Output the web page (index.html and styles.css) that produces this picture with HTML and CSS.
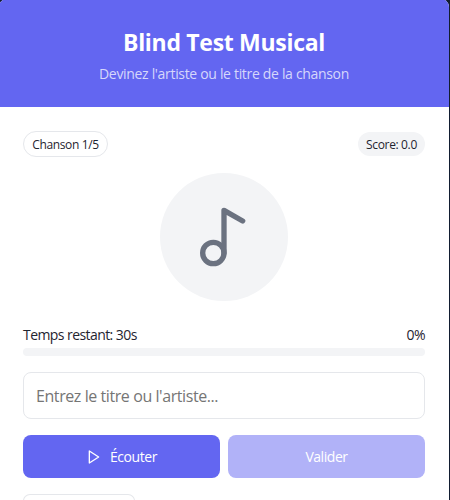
FILE: index.html
```html
<!DOCTYPE html>
<html lang="fr">
<head>
<meta charset="utf-8">
<title>Blind Test Musical</title>
<link rel="stylesheet" href="styles.css">
</head>
<body>
<main class="card">
  <header class="header">
    <h1 class="title">Blind Test Musical</h1>
    <p class="subtitle">Devinez l'artiste ou le titre de la chanson</p>
  </header>
  <div class="content">
    <div class="row">
      <span class="badge outline">Chanson 1/5</span>
      <span class="badge filled">Score: 0.0</span>
    </div>
    <div class="disc">
      <svg width="64" height="64" viewBox="0 0 24 24" fill="none" stroke="currentColor" stroke-width="2" stroke-linecap="round" stroke-linejoin="round"><circle cx="8" cy="18" r="4"/><path d="M12 18V2l7 4"/></svg>
    </div>
    <div class="row status"><span class="time">Temps restant: 30s</span><span class="percent">0%</span></div>
    <div class="progress"></div>
    <input class="answer" type="text" placeholder="Entrez le titre ou l'artiste...">
    <div class="actions">
      <button class="button"><svg width="16" height="16" viewBox="0 0 24 24" fill="none" stroke="currentColor" stroke-width="2" stroke-linecap="round" stroke-linejoin="round"><polygon points="5 3 19 12 5 21 5 3"/></svg><span class="listen">Écouter</span></button>
      <button class="button" disabled><span class="validate">Valider</span></button>
    </div>
    <div class="next"></div>
  </div>
</main>
</body>
</html>
```
FILE: styles.css
```css
* { box-sizing: border-box; }
body {
  margin: 0;
  height: 500px;
  overflow: hidden;
  background: #111c30;
  color: #1f2430;
  font-family: "Segoe UI", "Open Sans", "Noto Sans", sans-serif;
}
.card {
  width: 450px;
  height: 501px;
  margin: -1px 0 0 -1px;
  border-radius: 8px 8px 0 0;
  overflow: hidden;
  background: #fff;
}
.header {
  height: 108px;
  padding: 27px 24px 0;
  background: #6366f1;
  color: #fff;
  text-align: center;
  white-space: nowrap;
}
.title {
  margin: 0;
  font-size: 23px;
  font-weight: 700;
  line-height: 32px;
  letter-spacing: -0.3px;
}
.subtitle {
  margin: 6px 0 0;
  font-size: 14px;
  line-height: 20px;
  letter-spacing: -0.32px;
  color: #d6d7fb;
}
.content { padding: 24px 24px 0; }
.row {
  display: flex;
  justify-content: space-between;
  align-items: center;
  white-space: nowrap;
}
.badge {
  display: flex;
  align-items: center;
  justify-content: center;
  border-radius: 13px;
  font-size: 12px;
  letter-spacing: -0.35px;
}
.outline { width: 85px; height: 26px; border: 1px solid #e5e7eb; }
.filled { width: 67px; height: 24px; background: #f3f4f6; }
.disc {
  display: flex;
  align-items: center;
  justify-content: center;
  width: 128px;
  height: 128px;
  margin: 16px auto 24px;
  border-radius: 50%;
  background: #f3f4f6;
  color: #6b7280;
}
.status {
  height: 20px;
  padding-bottom: 2px;
  font-size: 14px;
  letter-spacing: -0.57px;
}
.progress {
  height: 8px;
  margin: 3px 0 16px;
  border-radius: 4px;
  background: #f3f4f6;
}
.answer {
  display: block;
  width: 100%;
  height: 47px;
  padding: 1px 12px 0;
  border: 1px solid #e5e7eb;
  border-radius: 8px;
  background: #fff;
  font: 16px "Segoe UI", "Open Sans", sans-serif;
  letter-spacing: -0.42px;
}
.answer::placeholder { color: #757575; opacity: 1; }
.actions {
  display: grid;
  grid-template-columns: 1fr 1fr;
  gap: 8px;
  margin: 16px 0;
}
.button {
  display: flex;
  align-items: center;
  justify-content: center;
  gap: 8px;
  height: 43px;
  padding: 0;
  border: 0;
  border-radius: 8px;
  background: #6366f1;
  color: #fff;
  font: 14px "Segoe UI", "Open Sans", sans-serif;
  letter-spacing: -0.45px;
}
.button:disabled { background: #b1b2f8; }
.next {
  width: 112px;
  height: 7px;
  border: 1px solid #e5e7eb;
  border-bottom: 0;
  border-radius: 8px 8px 0 0;
}
```
